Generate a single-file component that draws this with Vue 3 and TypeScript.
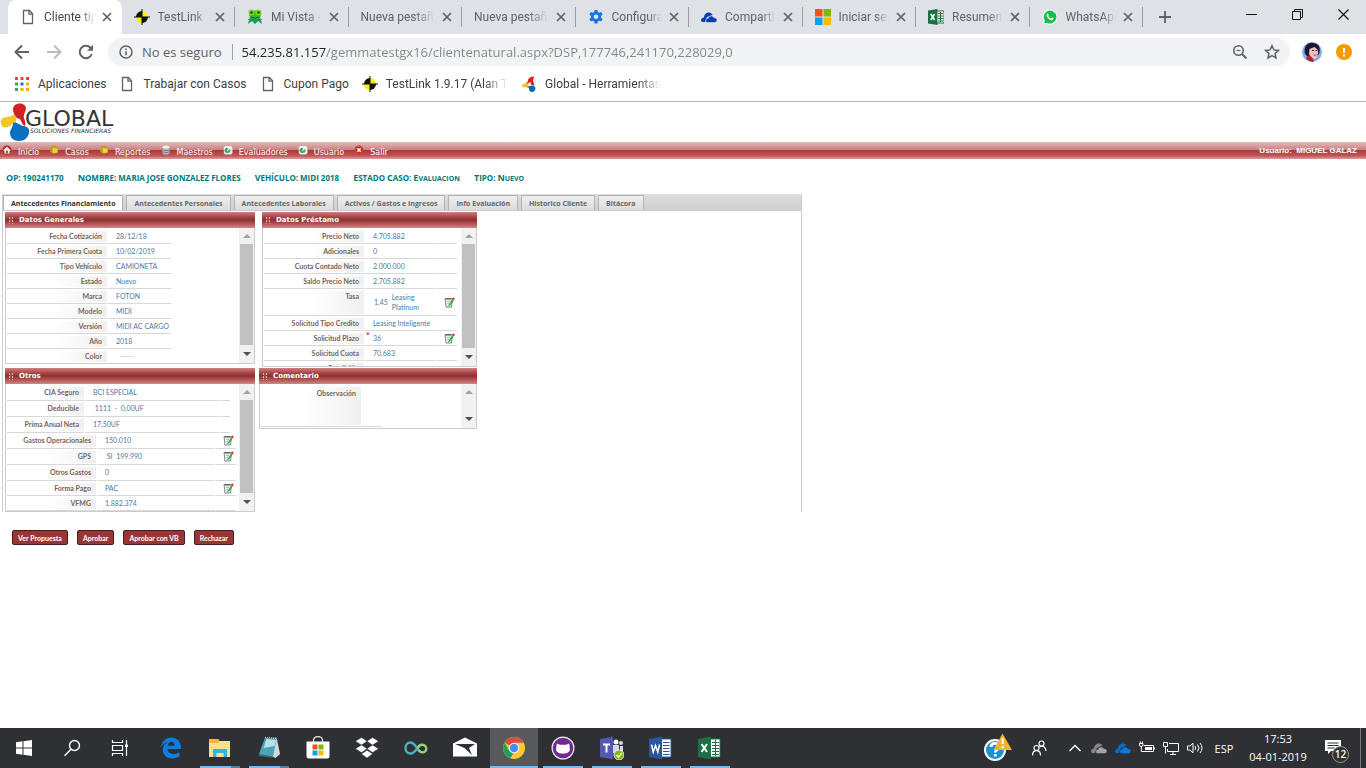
<script setup lang="ts">
import { ref } from 'vue'

interface BrowserTab { title: string; icon: string; active?: boolean }
interface Row { label: string; value: string; kind?: string; edit?: boolean; required?: boolean; note?: string }

const icons: Record<string, string> = {
  page: '<path d="M3.5 1.5h6l3 3.2v9.800h-9z" fill="none" stroke="#5f6368" stroke-width="1.3"/><path d="M9 1.500v3.700h3.500" fill="none" stroke="#5f6368" stroke-width="1.3"/>',
  testlink: '<path d="M8 2v6h6a6 6 0 0 0-6-6z" fill="#ffee00"/><path d="M2 8a6 6 0 0 1 6-6v6z" fill="#111"/><path d="M2 8a6 6 0 0 0 6 6V8z" fill="#ffee00"/><path d="M8 14a6 6 0 0 0 6-6H8z" fill="#111"/><path d="M8 0v16M0 8h16" stroke="#111" stroke-width="1"/>',
  frog: '<path d="M3 8h10l2 7-4-3-3 3-3-3-4 3z" fill="#169b2f"/><ellipse cx="8" cy="6" rx="6" ry="4.500" fill="#36b83e"/><circle cx="4.500" cy="3.500" r="3" fill="#7ed321"/><circle cx="11.500" cy="3.500" r="3" fill="#7ed321"/><circle cx="4.500" cy="3.500" r="1.300" fill="#154a12"/><circle cx="11.500" cy="3.500" r="1.300" fill="#154a12"/><path d="M4 8q4 2.500 8 0" stroke="#0f5f1a" fill="none"/><path d="M1 10l3 3M15 10l-3 3M8 11v3" stroke="#2e8fd0" stroke-width="1"/>',
  gear: '<path d="M6.600 1h2.800l.4 2 1.400.8 2-.7 1.400 2.400-1.600 1.400v1.700l1.600 1.400-1.400 2.400-2-.7-1.400.8-.4 2H6.600l-.4-2-1.400-.8-2 .7L1.400 10 3 8.600V6.900L1.400 5.500l1.400-2.400 2 .7L6.200 3z" fill="#1a73e8"/><circle cx="8" cy="7.750" r="2.300" fill="#dee1e6"/>',
  onedrive: '<path d="M0 11.500C0 9.500 1.500 8.500 3 8.500 3 5 6.500 2.500 9.500 4c1 .4 1.800 1.200 2.200 2L6 8l-2 5H2c-1 0-2-.6-2-1.500z" fill="#0a3fae"/><path d="M5 13c-.8-2 .3-3.700 2.200-3.800C7.800 6.600 11.600 6 13 8.700c2-.2 3 1 3 2.300S15 13.500 13.800 13.500H6c-.4 0-.8-.2-1-.5z" fill="#0a3fae" stroke="#dee1e6" stroke-width=".6"/>',
  microsoft: '<path d="M0 0h7.500v7.500H0z" fill="#f4511e"/><path d="M8.500 0H16v7.500H8.500z" fill="#7fba00"/><path d="M0 8.500h7.500V16H0z" fill="#00a4ef"/><path d="M8.500 8.500H16V16H8.500z" fill="#ffb900"/>',
  excel: '<path d="M8 2h8v12H8z" fill="#fff" stroke="#1d7044" stroke-width="1"/><path d="M10 4.500h5M10 7h5M10 9.500h5M10 12h5M12.500 3v10" stroke="#1d7044" stroke-width="1"/><path d="M0 1.600L9.500 0v16L0 14.400z" fill="#1d7044"/><path d="M2.800 5l3.800 6M6.600 5l-3.800 6" stroke="#fff" stroke-width="1.500"/>',
  whatsapp: '<path d="M8 .5a7.500 7.500 0 1 1-3.500 14.200L.5 15.500l1-3.800A7.500 7.500 0 0 1 8 .5z" fill="#fff"/><path d="M8 1.500a6.500 6.500 0 1 1-3.200 12.200L2 14.300l.8-2.700A6.500 6.500 0 0 1 8 1.500z" fill="#12c04b"/><path d="M5 4.800c.8-.8 1.300-.4 1.700.9.2.6-.7 1-.4 1.500.6 1.100 1.400 1.800 2.500 2.200.5.200.8-1 1.400-.8 1.500.6 1.500 1 .8 1.800-1.500 1.500-3.500.4-4.700-.8C5 8.300 3.900 6.300 5 4.800z" fill="#fff"/>',
  global: '<path d="M9.500 3.500L11 8.500M10.500 4L3.500 9.500M4 10l6 1.500" stroke="#e8a020" stroke-width="2" fill="none"/><path d="M7 4q1-3.500 6-3.500l-1 4 1.500 5-3-.5-1-3.500L6 8z" fill="#e02020"/><path d="M1 10q1-3 5-3l1 3-5 1.500z" fill="#f8c22a"/><path d="M7.500 10.500q6-2.500 7 2-.5 3.500-4 3.500-2 0-2.500-3z" fill="#0867bd"/>',
  apps: '<path d="M1 1h3v3H1zM6.500 1h3v3h-3zM12 1h3v3h-3z" fill="#ea4335"/><path d="M1 6.500h3v3H1z" fill="#34a853"/><path d="M6.500 6.500h3v3h-3z" fill="#1a73e8"/><path d="M12 6.500h3v3h-3z" fill="#fbab04"/><path d="M1 12h3v3H1z" fill="#34a853"/><path d="M6.500 12h3v3h-3zM12 12h3v3h-3z" fill="#fbab04"/>',
  home: '<circle cx="5" cy="5" r="4.500" fill="#c62020"/><path d="M1.500 5L5 1.800 8.500 5v.8H7.500V8.500h-5V5.800h-1z" fill="#fff"/><path d="M4 5.500h2v3H4z" fill="#d24a2a"/>',
  folder: '<path d="M1.500 4q0-3.500 3.500-3.500 2.500 0 4 2V8L5 9.500 1 8z" fill="#c89a1c"/><path d="M3.500 3l5 .5v4L4 8z" fill="#f0cb50"/><path d="M1 7.500l4 2L9 8" stroke="#8a650c" fill="none"/>',
  database: '<path d="M1.500 2v6c0 2 7 2 7 0V2z" fill="#b7bcc2"/><ellipse cx="5" cy="2" rx="3.500" ry="1.500" fill="#eceff2"/><path d="M1.500 4.500c1 1.500 6 1.500 7 0M1.500 6.500c1 1.500 6 1.500 7 0" stroke="#757e88" fill="none"/>',
  check: '<path d="M2 1h6l1.500 2v5L8 9.500H2L.8 8V2.500z" fill="#e8efe8"/><ellipse cx="4.500" cy="5.500" rx="3" ry="2.500" fill="#4aa862"/><path d="M4 5.500l4-3.500" stroke="#fff" stroke-width="1.500"/><circle cx="3.500" cy="4.500" r="1" fill="#2a6fb0"/>',
  exit: '<circle cx="5" cy="5" r="4.500" fill="#cb1b1b"/><circle cx="5" cy="5" r="3.800" fill="none" stroke="#f07060" stroke-width=".6"/><path d="M3.300 3.300l3.400 3.400M6.700 3.300L3.300 6.700" stroke="#fff" stroke-width="1.500"/>',
  edit: '<path d="M1 1.500h7.500l-1 8.500H2z" fill="#eef1f6" stroke="#77777c" stroke-width=".9"/><path d="M1.500 2h6" stroke="#55555a"/><path d="M3 4.500h3M3 6.500h2" stroke="#a5adb8" stroke-width=".8"/><path d="M4 8.800L8 2.500l1.700 1.200L5.500 9z" fill="#2fb52f"/><path d="M8.200 2.200L9.300.3l1.500 1.200-1 2z" fill="#e43c2c"/>',
  windows: '<path d="M4 6.200l6.500-.9v6.200H4zM11.500 5.200L20 4v7.500h-8.500zM4 12.500h6.500v6.200L4 17.800zM11.500 12.500H20V20l-8.500-1.200z" fill="#fff"/>',
  search: '<circle cx="14.500" cy="9.500" r="5" fill="none" stroke="#fff" stroke-width="1.400"/><path d="M11 13.200L4.500 19.700" stroke="#fff" stroke-width="1.400"/>',
  taskview: '<path d="M4.500 4v2.500h10V4M4.500 20v-2.500h10V20M4.500 9.500h10v5h-10zM18.500 4v16" fill="none" stroke="#fff" stroke-width="1.200"/><path d="M17 8.500h3V11h-3z" fill="#fff"/>',
  edge: '<path d="M2 11.500C3 4.500 7.500 1.500 12.500 1.500c6 0 9.700 4.300 9.500 11.500H8.500c.3 5 7.500 6.500 12 3.300v4.200C12 25 3.500 21 3.800 13.500 4 10 6 7.500 8.800 6.300 5.500 7 3.200 9 2 11.500zm6.800-1.800h6.900c0-5.200-6.400-5-6.900 0z" fill="#0f7ce0"/>',
  explorer: '<path d="M1 3h9l1.500 2H22v16H1z" fill="#fbe08a"/><path d="M1 3h9l1.500 2-1.500 2H1z" fill="#f2ba32"/><path d="M5 13h14v8h-3.500v-4h-7v4H5z" fill="#37b0e6"/>',
  notepad: '<path d="M8 2l12-1 3 17-4.500 4-17-2z" fill="#47686f"/><path d="M8 2l11.500 1-3.500 17.500L2 18z" fill="#4aa5ba"/><path d="M9.500 3l9.500 1-1.500 6-11 2z" fill="#b4e3ea"/><path d="M19.500 2l3.500 16-4.500 4-2.500-1.500z" fill="#d0d8da"/><path d="M8 1.500l12 1" stroke="#dfe9ea" stroke-dasharray="1 1"/>',
  store: '<path d="M7.500 7V4a4.500 3.500 0 0 1 9 0v3" fill="none" stroke="#ddd" stroke-width="1.300"/><path d="M.5 5.500h23V20q0 2.500-2.500 2.500H3Q.5 22.500.5 20z" fill="#fff"/><path d="M6.500 8.500h5v5h-5z" fill="#f25022"/><path d="M12.500 8.500h5v5h-5z" fill="#7fba00"/><path d="M6.500 14.500h5v5h-5z" fill="#00a4ef"/><path d="M12.500 14.500h5v5h-5z" fill="#ffb900"/>',
  dropbox: '<path d="M6.500 1.500L12 5.200 6.500 9 .5 5.200zM17.500 1.500l6 3.700-6 3.800L12 5.200zM6.500 9L12 12.700l-5.500 3.800-6-3.800zM17.500 9l6 3.700-6 3.800-5.500-3.800zM6.500 18l5.500-3.800 5.500 3.800-5.500 4z" fill="#fff" stroke="#2e3034" stroke-width=".4"/>',
  infinity: '<path d="M13.500 12c-2 3-4 5.500-7 5.500C3.500 17.500 1.500 15 1.500 12s2-5.500 5-5.500c4 0 6 6 9 8.500" fill="none" stroke="#48b3c0" stroke-width="2.400"/><path d="M13.500 12.500c1-2.500 2.500-3.700 4.500-3.700s4.300 1.200 4.300 3.700-2 3.900-4 3.900-3-1.400-4-2.400" fill="none" stroke="#95d477" stroke-width="2.400"/>',
  mail: '<path d="M0 7.500L12 1.500l12 6v13H0z" fill="#fff"/><path d="M2 8h20l-6 4 3 7-7.500-7z" fill="#2e3034"/>',
  chrome: '<circle cx="12" cy="12" r="11" fill="#fcc934"/><path d="M12 12L2.500 6.500A11 11 0 0 1 21.600 6.700H12z" fill="#dd4b3e"/><path d="M2.500 6.500L7.300 14.800l4.300 2.200-3.400 5.300A11 11 0 0 1 2.500 6.500z" fill="#1ea362"/><circle cx="12" cy="12" r="5.200" fill="#f5f5f5"/><circle cx="12" cy="12" r="4.200" fill="#4a8af4"/>',
  github: '<circle cx="12" cy="12" r="11.500" fill="#f2e8f4"/><circle cx="12" cy="12" r="10.300" fill="#6f2c8e"/><path d="M5.800 7.500l3.200 1.300h6l3.200-1.300.5 4c1 4-1.700 6-6.700 6S4.300 15.500 5.300 11.500z" fill="#fff"/>',
  teams: '<circle cx="16" cy="6" r="2.500" fill="#fff"/><circle cx="21" cy="7" r="2" fill="#d4d3f5"/><path d="M12 9h7v8h-7zM20 10h3v6h-3z" fill="#d4d3f5"/><path d="M0 3l13-2.500v23L0 21z" fill="#5558af"/><path d="M3 8.500h7M6.500 8.500v8" stroke="#fff" stroke-width="2"/><circle cx="19" cy="19" r="5" fill="#7bb813" stroke="#fff" stroke-width=".8"/><path d="M16.500 19l2 2 3.500-4" stroke="#fff" stroke-width="1.500" fill="none"/>',
  word: '<path d="M12 3h10v18H12z" fill="#fff" stroke="#2b579a"/><path d="M14 6.500h6.500M14 9.500h6.500M14 12.500h6.500M14 15.500h6.500M14 18.500h6.500" stroke="#2b579a"/><path d="M0 3l13-2.500v23L0 21z" fill="#2b579a"/><path d="M2.500 8.500l1.700 7.500 2.300-6.500L8.800 16l1.700-7.500" stroke="#fff" stroke-width="1.500" fill="none"/>',
  excelBig: '<path d="M12 3h10v18H12z" fill="#fff" stroke="#1d7044"/><path d="M14 6.500h7M14 9.500h7M14 12.500h7M14 15.500h7M14 18.500h7M17.500 4v16" stroke="#1d7044"/><path d="M0 3l13-2.500v23L0 21z" fill="#1d7044"/><path d="M3.500 8l5.500 8M9 8l-5.500 8" stroke="#fff" stroke-width="2"/>',
}

const tabs: BrowserTab[] = [
  { title: 'Cliente tipo', icon: 'page', active: true },
  { title: 'TestLink 1', icon: 'testlink' },
  { title: 'Mi Vista -', icon: 'frog' },
  { title: 'Nueva pestaña', icon: '' },
  { title: 'Nueva pestaña', icon: '' },
  { title: 'Configura', icon: 'gear' },
  { title: 'Comparti', icon: 'onedrive' },
  { title: 'Iniciar ses', icon: 'microsoft' },
  { title: 'Resumen', icon: 'excel' },
  { title: 'WhatsApp', icon: 'whatsapp' },
]

const bookmarks = [
  { title: 'Aplicaciones', icon: 'apps' },
  { title: 'Trabajar con Casos', icon: 'page' },
  { title: 'Cupon Pago', icon: 'page' },
  { title: 'TestLink 1.9.17 (Alan T', icon: 'testlink', fade: true },
  { title: 'Global - Herramientas', icon: 'global', fade: true },
]

const menu = [
  { title: 'Inicio', icon: 'home' },
  { title: 'Casos', icon: 'folder' },
  { title: 'Reportes', icon: 'folder' },
  { title: 'Maestros', icon: 'database' },
  { title: 'Evaluadores', icon: 'check' },
  { title: 'Usuario', icon: 'check' },
  { title: 'Salir', icon: 'exit' },
]

const summary = [
  { label: ['Op:'], value: ['190241170'] },
  { label: ['Nombre:'], value: ['MARIA', 'JOSE', 'GONZALEZ', 'FLORES'] },
  { label: ['Vehículo:'], value: ['MIDI', '2018'] },
  { label: ['Estado', 'Caso:'], value: ['Evaluacion'] },
  { label: ['Tipo:'], value: ['Nuevo'] },
]

const sections = ['Antecedentes Financiamiento', 'Antecedentes Personales', 'Antecedentes Laborales', 'Activos / Gastos e Ingresos', 'Info Evaluación', 'Historico Cliente', 'Bitácora']
const current = ref(0)

const general: Row[] = [
  { label: 'Fecha Cotización', value: '28/12/18' },
  { label: 'Fecha Primera Cuota', value: '10/02/2019' },
  { label: 'Tipo Vehículo', value: 'CAMIONETA' },
  { label: 'Estado', value: 'Nuevo' },
  { label: 'Marca', value: 'FOTON' },
  { label: 'Modelo', value: 'MIDI' },
  { label: 'Versión', value: 'MIDI AC CARGO' },
  { label: 'Año', value: '2018' },
  { label: 'Color', value: '-----', kind: 'empty' },
]

const loan: Row[] = [
  { label: 'Precio Neto', value: '4.705.882' },
  { label: 'Adicionales', value: '0' },
  { label: 'Cuota Contado Neto', value: '2.000.000' },
  { label: 'Saldo Precio Neto', value: '2.705.882' },
  { label: 'Tasa', value: '1,45', note: 'Leasing Platinum', kind: 'rate', edit: true },
  { label: 'Solicitud Tipo Credito', value: 'Leasing Inteligente' },
  { label: 'Solicitud Plazo', value: '36', edit: true, required: true },
  { label: 'Solicitud Cuota', value: '70.683' },
  { label: 'Condición', value: '' },
]

const insurance: Row[] = [
  { label: 'CIA Seguro', value: 'BCI ESPECIAL', kind: 'tall' },
  { label: 'Deducible', value: ' 1111  -  0,00UF', kind: 'tall' },
  { label: 'Prima Anual Neta', value: '17,50UF', kind: 'tall' },
]

const costs: Row[] = [
  { label: 'Gastos Operacionales', value: '150.010', edit: true, kind: 'tall' },
  { label: 'GPS', value: ' SI  199.990', edit: true, kind: 'tall' },
  { label: 'Otros Gastos', value: '0', kind: 'tall' },
  { label: 'Forma Pago', value: 'PAC', edit: true },
  { label: 'VFMG', value: '1.882.374' },
]

const actions = ['Ver Propuesta', 'Aprobar', 'Aprobar con VB', 'Rechazar']

const pinned = [
  { name: 'Inicio de Windows', icon: 'windows', state: '' },
  { name: 'Buscar', icon: 'search', state: '' },
  { name: 'Vista de tareas', icon: 'taskview', state: '' },
]
const apps = [
  { name: 'Edge', icon: 'edge', state: '' },
  { name: 'Explorador', icon: 'explorer', state: 'open stacked' },
  { name: 'Bloc de notas', icon: 'notepad', state: 'open stacked' },
  { name: 'Tienda', icon: 'store', state: '' },
  { name: 'Dropbox', icon: 'dropbox', state: '' },
  { name: 'Infinity', icon: 'infinity', state: '' },
  { name: 'Correo', icon: 'mail', state: '' },
  { name: 'Chrome', icon: 'chrome', state: 'focused' },
  { name: 'GitHub', icon: 'github', state: 'open' },
  { name: 'Teams', icon: 'teams', state: 'open' },
  { name: 'Word', icon: 'word', state: 'open' },
  { name: 'Excel', icon: 'excelBig', state: 'open' },
]
</script>

<template>
  <div class="desktop">
    <header class="browser">
      <div class="tabstrip">
        <ul class="tabs">
          <li v-for="(t, i) in tabs" :key="i" class="tab" :class="{ active: t.active }">
            <svg v-if="t.icon" class="fav" viewBox="0 0 16 16" v-html="icons[t.icon]" />
            <span class="tab-title">{{ t.title }}</span>
            <button class="close" aria-label="Cerrar pestaña"><svg viewBox="0 0 10 10"><path d="M1 1l8 8M9 1L1 9" stroke="#5f6368" stroke-width="1.700" /></svg></button>
          </li>
        </ul>
        <button class="new-tab" aria-label="Nueva pestaña"><svg viewBox="0 0 12 12"><path d="M6 0v12M0 6h12" stroke="#5f6368" stroke-width="1.800" /></svg></button>
        <div class="win-controls">
          <button aria-label="Minimizar"><svg viewBox="0 0 11 11"><path d="M0 5.500h11" stroke="#111" /></svg></button>
          <button aria-label="Restaurar"><svg viewBox="0 0 11 11"><path d="M.5 2.500h8v8h-8zM2.500 2.500v-2h8v8h-2" fill="none" stroke="#111" /></svg></button>
          <button aria-label="Cerrar"><svg viewBox="0 0 11 11"><path d="M.5 .5l10 10M10.500 .5l-10 10" stroke="#111" stroke-width="1.200" /></svg></button>
        </div>
      </div>

      <div class="toolbar">
        <button class="nav" aria-label="Atrás"><svg viewBox="0 0 16 16"><path d="M15 8H2M8 1.500L1.500 8 8 14.500" fill="none" stroke="#5f6368" stroke-width="2" /></svg></button>
        <button class="nav" aria-label="Adelante"><svg viewBox="0 0 16 16"><path d="M1 8h13M8 1.500L14.500 8 8 14.500" fill="none" stroke="#babcbe" stroke-width="2" /></svg></button>
        <button class="nav" aria-label="Recargar"><svg viewBox="0 0 16 16"><path d="M13.800 10A6.200 6.200 0 1 1 12.500 3.700L14 5.200" fill="none" stroke="#5f6368" stroke-width="2" /><path d="M15 .8v6H9z" fill="#5f6368" /></svg></button>
        <div class="omnibox">
          <svg class="info" viewBox="0 0 14 14"><circle cx="7" cy="7" r="6" fill="none" stroke="#5f6368" stroke-width="1.500" /><path d="M7 6.200v4M7 3.500v1.600" stroke="#5f6368" stroke-width="1.600" /></svg>
          <span class="insecure">No es seguro</span>
          <input class="url" type="text" aria-label="Dirección" value="54.235.81.157/gemmatestgx16/clientenatural.aspx?DSP,177746,241170,228029,0">
          <button class="nav" aria-label="Zoom"><svg viewBox="0 0 16 16"><circle cx="6.500" cy="6.500" r="4.700" fill="none" stroke="#5f6368" stroke-width="1.600" /><path d="M10 10l4.500 4.500" stroke="#5f6368" stroke-width="2" /><path d="M4.500 6.500h4" stroke="#5f6368" stroke-width="1.200" /></svg></button>
          <button class="nav" aria-label="Marcador"><svg viewBox="0 0 16 16"><path d="M8 1.700l1.900 4.200 4.600.5-3.400 3.100.9 4.500-4-2.300-4 2.300.9-4.500L1.500 6.400l4.600-.5z" fill="none" stroke="#5f6368" stroke-width="1.500" /></svg></button>
        </div>
        <button class="nav avatar" aria-label="Perfil">
          <svg viewBox="0 0 20 20"><circle cx="10" cy="10" r="10" fill="#80b0e4" /><path d="M3 12C1 4 6 0 11 1c6 0 8 5 6 11l-3 3-7 1z" fill="#1b1733" /><path d="M7.500 7l5-2 3.500 3q.500 7-3 9-4 0-6-5z" fill="#eebfc0" /><path d="M10 8.500h2M13.500 8.500h2" stroke="#3a2030" /><path d="M11.500 13h3" stroke="#c43a4a" /><path d="M4 16l3-3 4 3.500 1 3.200q-5 .8-8-3.700z" fill="#b5212c" /></svg>
        </button>
        <button class="nav alert" aria-label="Actualizar"><svg viewBox="0 0 16 16"><circle cx="8" cy="8" r="8" fill="#f59b00" /><path d="M8 4v5M8 10.500v2" stroke="#fff" stroke-width="2" /></svg></button>
      </div>

      <nav class="bookmarks">
        <a v-for="b in bookmarks" :key="b.title" href="#" :class="{ fade: b.fade }">
          <svg class="fav" viewBox="0 0 16 16" v-html="icons[b.icon]" /><span>{{ b.title }}</span>
        </a>
      </nav>
    </header>

    <main class="page">
      <div class="brand">
        <svg class="mark" viewBox="0 0 34 38" aria-hidden="true">
          <path d="M18 5c-1 7-7 8-11 9C2 14 0 17 1 21c1 5 7 4 10 1 3-2 6-2 8-3 3-3 2-8-1-14z" fill="#f6c629" />
          <path d="M13 6C14-1 25-1 26 5c0 4-3 6-2 10 1 3 2 5 1 8l-5-3c-1-5-7-7-7-14z" fill="#cf2128" />
          <path d="M16 15l4 1 3 6-4 2-5-3q3-3 2-6z" fill="#fff" />
          <path d="M13 20c3-2 6 2 11 3 4 1 6 3 5 7-1 5-5 8-10 8s-9-3-9-8c0-4 3-5 3-10z" fill="#0a70c0" />
        </svg>
        <div class="wordmark"><strong>GLOBAL</strong><small>SOLUCIONES FINANCIERAS</small></div>
      </div>

      <nav class="menubar">
        <a v-for="m in menu" :key="m.title" href="#"><svg viewBox="0 0 10 10" v-html="icons[m.icon]" /><span>{{ m.title }}</span></a>
        <p class="user">Usuario:&nbsp; MIGUEL GALAZ</p>
      </nav>

      <div class="summary">
        <p v-for="s in summary" :key="s.label[0]">
          <span v-for="w in s.label" :key="w" class="label">{{ w }}</span>
          <span v-for="w in s.value" :key="w" :class="{ mixed: w !== w.toUpperCase() }">{{ w }}</span>
        </p>
      </div>

      <section class="case">
        <div class="sections" role="tablist">
          <button v-for="(s, i) in sections" :key="s" role="tab" :aria-selected="current === i" :class="{ on: current === i }" @click="current = i">{{ s }}</button>
        </div>
        <div class="panels">
          <div class="col">
            <section class="panel general">
              <h2><i class="grip" />Datos Generales</h2>
              <div class="body">
                <div class="content">
                  <table>
                    <colgroup><col class="w100"><col class="w62"></colgroup>
                    <tbody><tr v-for="r in general" :key="r.label"><th scope="row">{{ r.label }}</th><td :class="r.kind">{{ r.value }}</td></tr></tbody>
                  </table>
                </div>
                <div class="scroll"><i class="up" /><i class="thumb" /><i class="down" /></div>
              </div>
            </section>
            <section class="panel others">
              <h2><i class="grip" />Otros</h2>
              <div class="body">
                <div class="content">
                  <table>
                    <colgroup><col class="w77"><col class="w134"><col class="w10"></colgroup>
                    <tbody><tr v-for="r in insurance" :key="r.label" :class="r.kind"><th scope="row">{{ r.label }}</th><td>{{ r.value }}</td><td /></tr></tbody>
                  </table>
                  <table>
                    <colgroup><col class="w88"><col class="w118"><col class="w20"></colgroup>
                    <tbody>
                      <tr v-for="r in costs" :key="r.label" :class="r.kind">
                        <th scope="row">{{ r.label }}</th><td>{{ r.value }}</td>
                        <td class="tool"><button v-if="r.edit" :aria-label="'Editar ' + r.label"><svg viewBox="0 0 11 11" v-html="icons.edit" /></button></td>
                      </tr>
                    </tbody>
                  </table>
                </div>
                <div class="scroll"><i class="up" /><i class="thumb" /><i class="down" /></div>
              </div>
            </section>
          </div>
          <div class="col">
            <section class="panel loan">
              <h2><i class="grip" />Datos Préstamo</h2>
              <div class="body">
                <div class="content">
                  <table>
                    <colgroup><col class="w100"><col class="w70"><col class="w20"></colgroup>
                    <tbody>
                      <tr v-for="r in loan" :key="r.label" :class="r.kind">
                        <th scope="row">{{ r.label }}</th>
                        <td :class="{ required: r.required }"><div v-if="r.note" class="rate-cell"><span>{{ r.value }}</span><span>{{ r.note }}</span></div><template v-else>{{ r.value }}</template></td>
                        <td class="tool"><button v-if="r.edit" :aria-label="'Editar ' + r.label"><svg viewBox="0 0 11 11" v-html="icons.edit" /></button></td>
                      </tr>
                    </tbody>
                  </table>
                </div>
                <div class="scroll"><i class="up" /><i class="thumb" /><i class="down" /></div>
              </div>
            </section>
            <section class="panel comment">
              <h2><i class="grip" />Comentario</h2>
              <div class="body">
                <div class="content">
                  <table>
                    <colgroup><col class="w100"><col class="w20"></colgroup>
                    <tbody><tr><th scope="row">Observación</th><td /></tr></tbody>
                  </table>
                </div>
                <div class="scroll"><i class="up" /><i class="gap" /><i class="down" /></div>
              </div>
            </section>
          </div>
        </div>
      </section>

      <div class="actions"><button v-for="a in actions" :key="a">{{ a }}</button></div>
    </main>

    <footer class="taskbar">
      <div class="group"><button v-for="a in pinned" :key="a.name" :aria-label="a.name"><svg viewBox="0 0 24 24" v-html="icons[a.icon]" /></button></div>
      <div class="group apps"><button v-for="a in apps" :key="a.name" :aria-label="a.name" :class="a.state"><svg viewBox="0 0 24 24" v-html="icons[a.icon]" /></button></div>
      <div class="tray">
        <button class="help" aria-label="Ayuda"><svg viewBox="0 0 30 30"><circle cx="12" cy="17" r="11" fill="#fff" /><circle cx="12" cy="17" r="9" fill="#1a93d0" /><path d="M8 14c0-5 8-4.500 8-.5 0 3-3.700 3-3.700 6M12.300 21v2.500" stroke="#fff" stroke-width="2.800" fill="none" /><path d="M19.500 .5L29 17H10.500z" fill="#f7b32b" /><path d="M19.700 5v6M19.700 13v2.200" stroke="#fff" stroke-width="2" /></svg></button>
        <button class="people" aria-label="Contactos"><svg viewBox="0 0 16 16"><circle cx="5.500" cy="8" r="2.500" fill="none" stroke="#fff" stroke-width="1.200" /><path d="M1.500 15.500c0-6.500 8-6.500 8 0" fill="none" stroke="#fff" stroke-width="1.200" /><circle cx="10.500" cy="3.500" r="2.500" fill="none" stroke="#fff" stroke-width="1.200" /><path d="M8.500 7c3-2 6-.5 6.500 4" fill="none" stroke="#fff" stroke-width="1.200" /></svg></button>
        <button aria-label="Mostrar iconos ocultos"><svg viewBox="0 0 16 16"><path d="M2.500 11L8 5.500l5.500 5.500" fill="none" stroke="#fff" stroke-width="1.300" /></svg></button>
        <button aria-label="OneDrive"><svg viewBox="0 0 16 16"><path d="M0 11.500c0-2 1.500-3 3-3C3 4 8.500 1.500 11.500 5.500L6 8l-2 5H2c-1 0-2-.6-2-1.500z" fill="#858585" /><path d="M5 13c-.8-2 .3-3.700 2.200-3.800C7.800 6.600 11.600 6 13 8.700c2-.2 3 1 3 2.300s-1 2.500-2.200 2.500H6c-.4 0-.8-.2-1-.5z" fill="#a5a5a5" stroke="#2e3034" stroke-width=".5" /></svg></button>
        <button aria-label="OneDrive empresa"><svg viewBox="0 0 16 16"><path d="M0 11.500c0-2 1.500-3 3-3C3 4 8.500 1.500 11.500 5.500L6 8l-2 5H2c-1 0-2-.6-2-1.500z" fill="#0b68ce" /><path d="M5 13c-.8-2 .3-3.700 2.200-3.800C7.800 6.600 11.600 6 13 8.700c2-.2 3 1 3 2.300s-1 2.500-2.200 2.500H6c-.4 0-.8-.2-1-.5z" fill="#0b79e0" stroke="#2e3034" stroke-width=".5" /></svg></button>
        <button aria-label="Batería"><svg viewBox="0 0 16 16"><path d="M5 5.500h9.500v6H4" fill="none" stroke="#fff" /><path d="M6 7h7v3H6zM14.500 7.500H16v2h-1.500z" fill="#fff" /><path d="M.5 3.500v1.500q0 1.500 1.800 1.500T4 5V3.500zM2.300 6.500v5H4M1.300 1.500v2M3.300 1.500v2" fill="none" stroke="#fff" /></svg></button>
        <button aria-label="Red"><svg viewBox="0 0 16 16"><path d="M6 3.500h9.500v8H4.500V9M10 11.500v3M7 14.500h6M.5 2.500h4v4h-4zM2.500 6.500v7" fill="none" stroke="#fff" /></svg></button>
        <button aria-label="Volumen"><svg viewBox="0 0 16 16"><path d="M.5 6h2.500l3-3v10L3 10H.5zM8 6q1.500 2 0 4M10.500 4.500q3 3.500 0 7M13 3q4 5 0 10" fill="none" stroke="#fff" /></svg></button>
        <button class="lang">ESP</button>
        <div class="clock"><time>17:53</time><time>04-01-2019</time></div>
        <button class="notif" aria-label="Notificaciones"><svg viewBox="0 0 16 16"><path d="M0 1h16v11H6l-3 3v-3H0z" fill="#fff" /><path d="M2.500 4h11M2.500 6.500h11M2.500 9h7" stroke="#2e3034" /></svg><span>12</span></button>
      </div>
    </footer>
  </div>
</template>

<style>
body { margin: 0; background: #fff; }
</style>

<style scoped>
* { box-sizing: border-box; }
button { margin: 0; padding: 0; border: 0; background: none; font: inherit; color: inherit; }
a { color: inherit; text-decoration: none; }
h2, p, ul { margin: 0; padding: 0; }
svg { display: block; flex: none; }
.desktop { min-height: 100vh; display: flex; flex-direction: column; font-family: "Open Sans", "Noto Sans", sans-serif; }

.tabstrip { display: flex; align-items: center; height: 34px; background: #dee1e6; padding-left: 8px; }
.tabs { flex: 0 1 1135px; display: flex; min-width: 0; height: 34px; list-style: none; }
.tab { flex: 1 1 0; min-width: 0; display: flex; align-items: center; gap: 8px; padding: 0 7px 0 12px; color: #5f6368; font: 12px/16px Roboto, sans-serif; position: relative; }
.tab:not(.active)::after { content: ""; position: absolute; right: 0; top: 7px; height: 20px; width: 1px; background: #9a9da1; }
.tab.active { background: #fff; border-radius: 8px 8px 0 0; color: #45494d; }
.fav { width: 16px; height: 16px; }
.tab-title { flex: 1; min-width: 0; margin-right: -4px; overflow: hidden; white-space: nowrap; -webkit-mask-image: linear-gradient(90deg, #000 72%, transparent); mask-image: linear-gradient(90deg, #000 72%, transparent); }
.close { width: 16px; height: 16px; padding: 3px; flex: none; }
.new-tab { margin-left: 16px; width: 12px; height: 12px; flex: none; }
.win-controls { margin-left: auto; display: flex; align-self: flex-start; }
.win-controls button { width: 46px; height: 29px; display: flex; align-items: center; justify-content: center; }
.win-controls svg { width: 11px; height: 11px; }

.toolbar { display: flex; align-items: center; gap: 16px; height: 36px; padding: 0 14px; }
.nav { width: 16px; height: 16px; flex: none; }
.omnibox { flex: 1; min-width: 0; display: flex; align-items: center; height: 28px; margin-left: -2px; padding: 0 10px 0 11px; border-radius: 14px; background: #f1f3f4; gap: 9px; }
.info { width: 14px; height: 14px; }
.insecure { font-size: 13px; line-height: 16px; color: #5f6368; padding-right: 10px; border-right: 1px solid #9aa0a6; white-space: nowrap; }
.url { flex: 1; min-width: 0; border: 0; padding: 0; outline: 0; font: 13px/18px "Open Sans", "Noto Sans", sans-serif; color: transparent; background: linear-gradient(90deg, #202124 84px, #80868b 84px); -webkit-background-clip: text; background-clip: text; }
.omnibox .nav + .nav { margin-left: 7px; }
.avatar { width: 20px; height: 20px; margin-left: -4px; }
.alert { margin-left: -2px; }

.bookmarks { display: flex; align-items: center; gap: 13px; height: 32px; padding: 0 14px 4px; font: 12px/16px Roboto, sans-serif; color: #3c4043; border-bottom: 1px solid #b6b4b6; }
.bookmarks a { display: flex; align-items: center; gap: 8px; white-space: nowrap; }
.bookmarks .fade span { -webkit-mask-image: linear-gradient(90deg, #000 80%, transparent); mask-image: linear-gradient(90deg, #000 80%, transparent); }

.page { flex: 1; }
.brand { display: flex; height: 40px; align-items: flex-start; padding-top: 1px; }
.mark { width: 34px; height: 38px; }
.wordmark { margin: 7px 0 0 -9px; font-family: "DejaVu Sans", sans-serif; color: #333; }
.wordmark strong { display: block; font-size: 22px; line-height: 17px; font-weight: 400; }
.wordmark small { display: block; font-size: 6px; line-height: 7px; font-style: italic; padding-left: 5px; }
.menubar { display: flex; gap: 10px; height: 17px; padding: 0 9px 0 2px; align-items: flex-start; background: linear-gradient(#e2bcbc, #c98080 46%, #ad3a3a 50%, #c05555 80%, #dc9c9c); color: #fff; font: 8px/10px "DejaVu Sans", sans-serif; }
.menubar a { display: flex; gap: 6px; align-items: flex-start; }
.menubar a svg { width: 10px; height: 10px; margin-top: 3px; }
.menubar a span { padding-top: 6px; }
.user { margin-left: auto; padding-top: 4px; font: 700 8px/10px "Liberation Sans", sans-serif; }
.summary { display: flex; gap: 14px; padding: 12px 6px 9px; font: 700 8px/13px "Open Sans", sans-serif; color: #007a7a; text-transform: uppercase; }
.summary p { display: flex; gap: 2px; align-items: baseline; }
.summary span { display: block; }
.summary .mixed { font-size: 7px; }
.summary .label::first-letter, .summary .mixed::first-letter { font-size: 9px; }

.case { width: 800px; max-width: calc(100% - 4px); margin-left: 2px; border: 1px solid #ccc; border-width: 0 1px; }
.sections { display: flex; gap: 3px; height: 17px; padding: 1px 0; background: linear-gradient(#dedede, #cfcfcf); border-bottom: 1px solid #ccc; }
.sections button { height: 15px; padding: 0 7px; border: 1px solid #b4b4b4; border-bottom: 0; background: linear-gradient(#efefef, #dcdcdc); color: #666; font: 700 7px/13px "Open Sans", sans-serif; white-space: nowrap; }
.sections .on { background: #fff; color: #333; }
.panels { display: flex; gap: 4px; padding: 1px 0 0 2px; align-items: flex-start; }
.col { display: flex; flex-direction: column; }
.panel h2 { display: flex; align-items: center; height: 16px; padding-left: 4px; gap: 6px; background: linear-gradient(#cf8080, #a84848 30%, #8f3030 50%, #b86060 80%, #d08a8a); color: #fff; font: 700 7px/14px "DejaVu Sans", sans-serif; }
.grip { width: 4px; height: 7px; background: linear-gradient(90deg, transparent 1px, #a34848 1px 3px, transparent 3px), repeating-linear-gradient(#e3b0b0 0 2px, transparent 2px 3px); }
.body { display: flex; border: 1px solid #ccc; border-top: 0; }
.content { flex: 1; min-width: 0; overflow: hidden; padding-top: 1px; }
table { border-collapse: separate; border-spacing: 1px 0; table-layout: fixed; width: min-content; font: 7px/9px Lato, sans-serif; }
th, td { height: 15px; padding: 0; border-bottom: 1px solid #d8d8d8; vertical-align: middle; overflow: hidden; white-space: pre; }
th { padding-right: 5px; text-align: right; color: #75655c; background: linear-gradient(90deg, #fff 45%, #f0f0f0) center / 100% calc(100% - 3px) no-repeat; }
td { padding-left: 8px; color: #4a7ba6; }
.w100 { width: 100px; } .w62 { width: 63px; } .w77 { width: 77px; } .w134 { width: 134px; } .w10 { width: 10px; }
.w88 { width: 89px; } .w118 { width: 118px; } .w20 { width: 20px; } .w70 { width: 71px; }
.tall th, .tall td { height: 16px; }
.empty { padding-left: 12px; color: #aaa; }
.tool { padding: 0 0 0 7px; }
.tool button, .tool svg { display: block; width: 11px; height: 11px; }
.scroll { width: 15px; flex: none; background: #f1f1f1; display: flex; flex-direction: column; align-items: center; }
.scroll i { display: block; }
.up, .down { border: 4px solid transparent; }
.up { margin: 6px 0; border-top: 0; border-bottom: 4px solid #a3a3a3; }
.down { margin: 7px 0; border-bottom: 0; border-top: 4px solid #505050; }
.thumb, .gap { flex: 1; width: 13px; }
.thumb { background: #c1c1c1; }

.general { width: 250px; }
.general .body { height: 136px; }
.others { width: 250px; margin-top: 4px; }
.others .body { height: 128px; }
.loan { width: 215px; margin-left: 3px; }
.loan .body { height: 139px; }
.loan .rate th { height: 27px; vertical-align: top; padding-top: 3px; }
.rate-cell { display: flex; align-items: center; gap: 4px; line-height: 10px; padding-left: 1px; white-space: normal; }
.required { position: relative; }
.required::before { content: "*"; position: absolute; left: 1px; top: 0; color: #e01010; font-size: 9px; font-weight: 700; }
.comment { width: 218px; margin-top: 1px; }
.comment .body { height: 45px; }
.comment th { height: 42px; vertical-align: top; padding-top: 4px; }

.actions { display: flex; gap: 9px; padding: 18px 12px; }
.actions button { height: 15px; padding: 0 5px; border: 1px solid #4a1c1c; border-radius: 2px; background: #983636; color: #fff; font: 700 7px/12px Lato, sans-serif; }

.taskbar { display: flex; height: 40px; background: #2e3034; color: #fff; }
.group { display: flex; }
.group button { position: relative; width: 48px; height: 40px; display: flex; align-items: center; justify-content: center; }
.group svg { width: 24px; height: 24px; }
.apps { margin-left: 3px; gap: 1px; }
.open::after, .focused::after { content: ""; position: absolute; left: 4px; right: 4px; bottom: 0; height: 2px; background: #76b9ed; }
.stacked::after { background: linear-gradient(90deg, #76b9ed 31px, #4d7ea5 31px); }
.focused { background: #58595c; }
.focused::after { left: 0; right: 0; }
.tray { margin-left: auto; display: flex; align-items: center; padding-right: 5px; }
.tray button { width: 24px; display: flex; justify-content: center; align-items: center; }
.tray svg { width: 16px; height: 16px; }
.tray .help { width: 30px; margin-right: 14px; }
.tray .help svg { width: 30px; height: 30px; }
.tray .people { margin-right: 12px; }
.tray .lang { width: 34px; font-size: 11px; }
.clock { width: 74px; text-align: center; font-size: 11px; line-height: 18px; }
.clock time { display: block; }
.tray .notif { position: relative; width: 46px; height: 40px; padding: 0 10px 3px 0; border-right: 1px solid #77787a; }
.notif span { position: absolute; left: 17px; top: 18px; width: 17px; height: 17px; border: 1px solid #999; border-radius: 50%; background: #2e3034; font-size: 10px; line-height: 15px; text-align: center; font-weight: 600; }
</style>
